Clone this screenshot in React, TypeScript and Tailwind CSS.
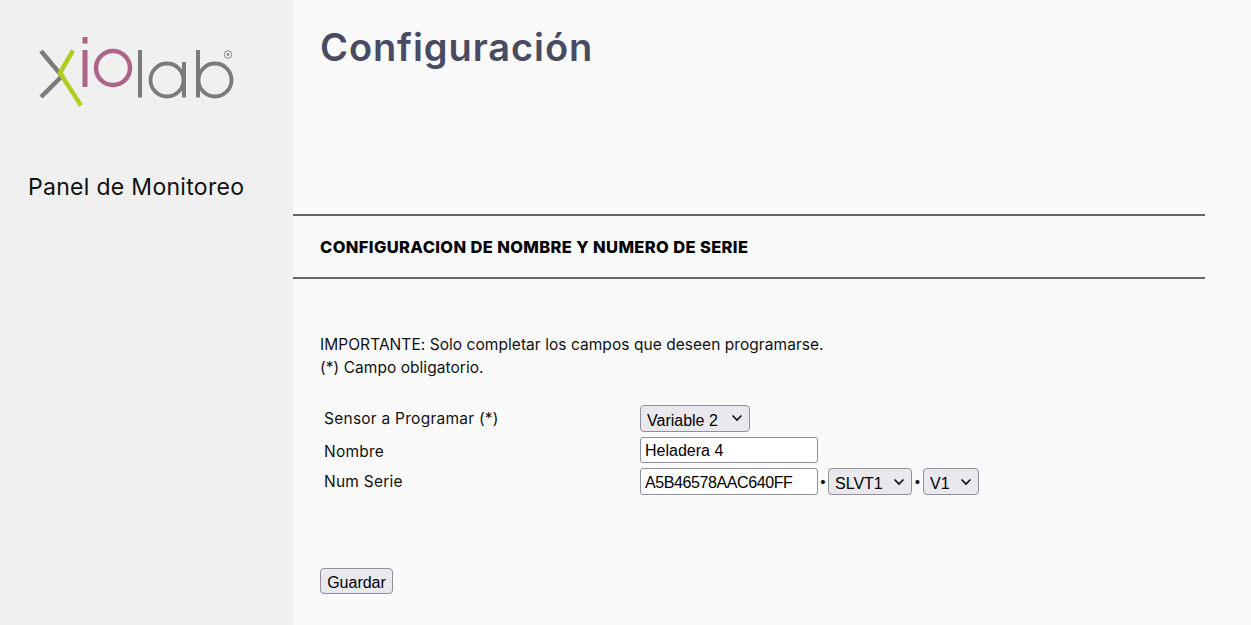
const chevron = (
  <svg className="pointer-events-none absolute right-[7px] top-1/2 -translate-y-1/2" width="12" height="8" viewBox="0 0 12 8" fill="none">
    <path d="M1.5 1.5 L6 6 L10.5 1.5" stroke="#111" strokeWidth="1.7" />
  </svg>
);

function Sel({ value, w }: { value: string; w: string }) {
  return (
    <span className={`relative inline-block h-[27px] ${w}`}>
      <select
        defaultValue={value}
        className="h-full w-full appearance-none rounded-[4px] border border-[#8f8f9d] bg-[#e9e9ed] pl-[6px] pt-[3px] font-['Liberation_Sans',sans-serif] text-[16px] tracking-normal text-black"
      >
        <option>{value}</option>
      </select>
      {chevron}
    </span>
  );
}

function Logo() {
  return (
    <svg width="200" height="74" viewBox="38 35 200 74" fill="none" className="blur-[0.5px]">
      <path d="M41 51 L62 76 L41 97" stroke="#7b7b7b" strokeWidth="4.500" />
      <path d="M73 50.500 L60 73 L81 105.500" stroke="#b3cc1d" strokeWidth="4.500" />
      <path d="M85 37 V43.500 M85 50 V87" stroke="#ad6488" strokeWidth="5" />
      <circle cx="113" cy="68" r="17" stroke="#ad6488" strokeWidth="4.500" />
      <path d="M140 50 V97.500" stroke="#7b7b7b" strokeWidth="4" />
      <circle cx="167" cy="80" r="16.500" stroke="#7b7b7b" strokeWidth="3.800" />
      <path d="M184 62 V97.500" stroke="#7b7b7b" strokeWidth="4" />
      <path d="M198 50 V97.500" stroke="#7b7b7b" strokeWidth="4" />
      <circle cx="215" cy="80" r="16.500" stroke="#7b7b7b" strokeWidth="3.800" />
      <circle cx="228" cy="54.500" r="3.800" stroke="#8a8a8a" strokeWidth="1" />
      <circle cx="228" cy="54.500" r="1.400" fill="#8a8a8a" />
    </svg>
  );
}

export default function App() {
  return (
    <div className="flex h-[625px] w-full overflow-hidden bg-[#fafafa] font-['Inter',sans-serif] text-black">
      <aside className="w-[293px] shrink-0 bg-[#f0f0f0]">
        <div className="ml-[38px] mt-[35px]">
          <Logo />
        </div>
        <p className="ml-[28px] mt-[63px] text-[23px] leading-[30px] tracking-[0.3px] text-[#111]">Panel de Monitoreo</p>
      </aside>
      <main className="flex-1 pr-[46px]">
        <h1 className="ml-[27px] mt-[20px] text-[38px] font-semibold leading-[54px] tracking-[0.9px] text-[#4a4a63]">Configuración</h1>
        <div className="mt-[140px] flex h-[65px] items-center border-y-2 border-[#666] pl-[27px] pt-[2px]">
          <h2 className="text-[16.500px] font-extrabold tracking-[0.37px] text-black">CONFIGURACION DE NOMBRE Y NUMERO DE SERIE</h2>
        </div>
        <div className="ml-[27px] mt-[54px] text-[15.500px] leading-[23px] tracking-[0.05px] text-[#111]">
          <p>IMPORTANTE: Solo completar los campos que deseen programarse.</p>
          <p>(*) Campo obligatorio.</p>
        </div>
        <div className="ml-[31px] mt-[23px] flex flex-col text-[15.500px] tracking-[0.25px] text-[#111]">
          <div className="flex h-[32px] items-center">
            <span className="mt-[2px] w-[316px]">Sensor a Programar (*)</span>
            <Sel value="Variable 2" w="w-[110px]" />
          </div>
          <div className="flex h-[31px] items-center">
            <span className="mt-[4px] w-[316px]">Nombre</span>
            <input
              defaultValue="Heladera 4"
              className="h-[26px] w-[178px] rounded-[3px] border border-[#8f8f9d] bg-white px-[4px] pt-[2px] font-['Liberation_Sans',sans-serif] text-[16px] tracking-normal text-black"
            />
          </div>
          <div className="flex h-[33px] items-center">
            <span className="w-[316px]">Num Serie</span>
            <input
              defaultValue="A5B46578AAC640FF"
              className="h-[27px] w-[178px] rounded-[3px] border border-[#8f8f9d] bg-white px-[4px] pt-[3px] font-['Liberation_Sans',sans-serif] text-[16px] tracking-[-0.4px] text-black"
            />
            <span className="w-[10px] text-center text-[13px]">•</span>
            <Sel value="SLVT1" w="w-[84px]" />
            <span className="w-[11px] text-center text-[13px]">•</span>
            <Sel value="V1" w="w-[56px]" />
          </div>
        </div>
        <button className="ml-[27px] mt-[70px] h-[26px] w-[73px] rounded-[4px] border border-[#8f8f9d] bg-[#e9e9ed] pt-[2px] font-['Liberation_Sans',sans-serif] text-[16px] text-black">
          Guardar
        </button>
      </main>
    </div>
  );
}
